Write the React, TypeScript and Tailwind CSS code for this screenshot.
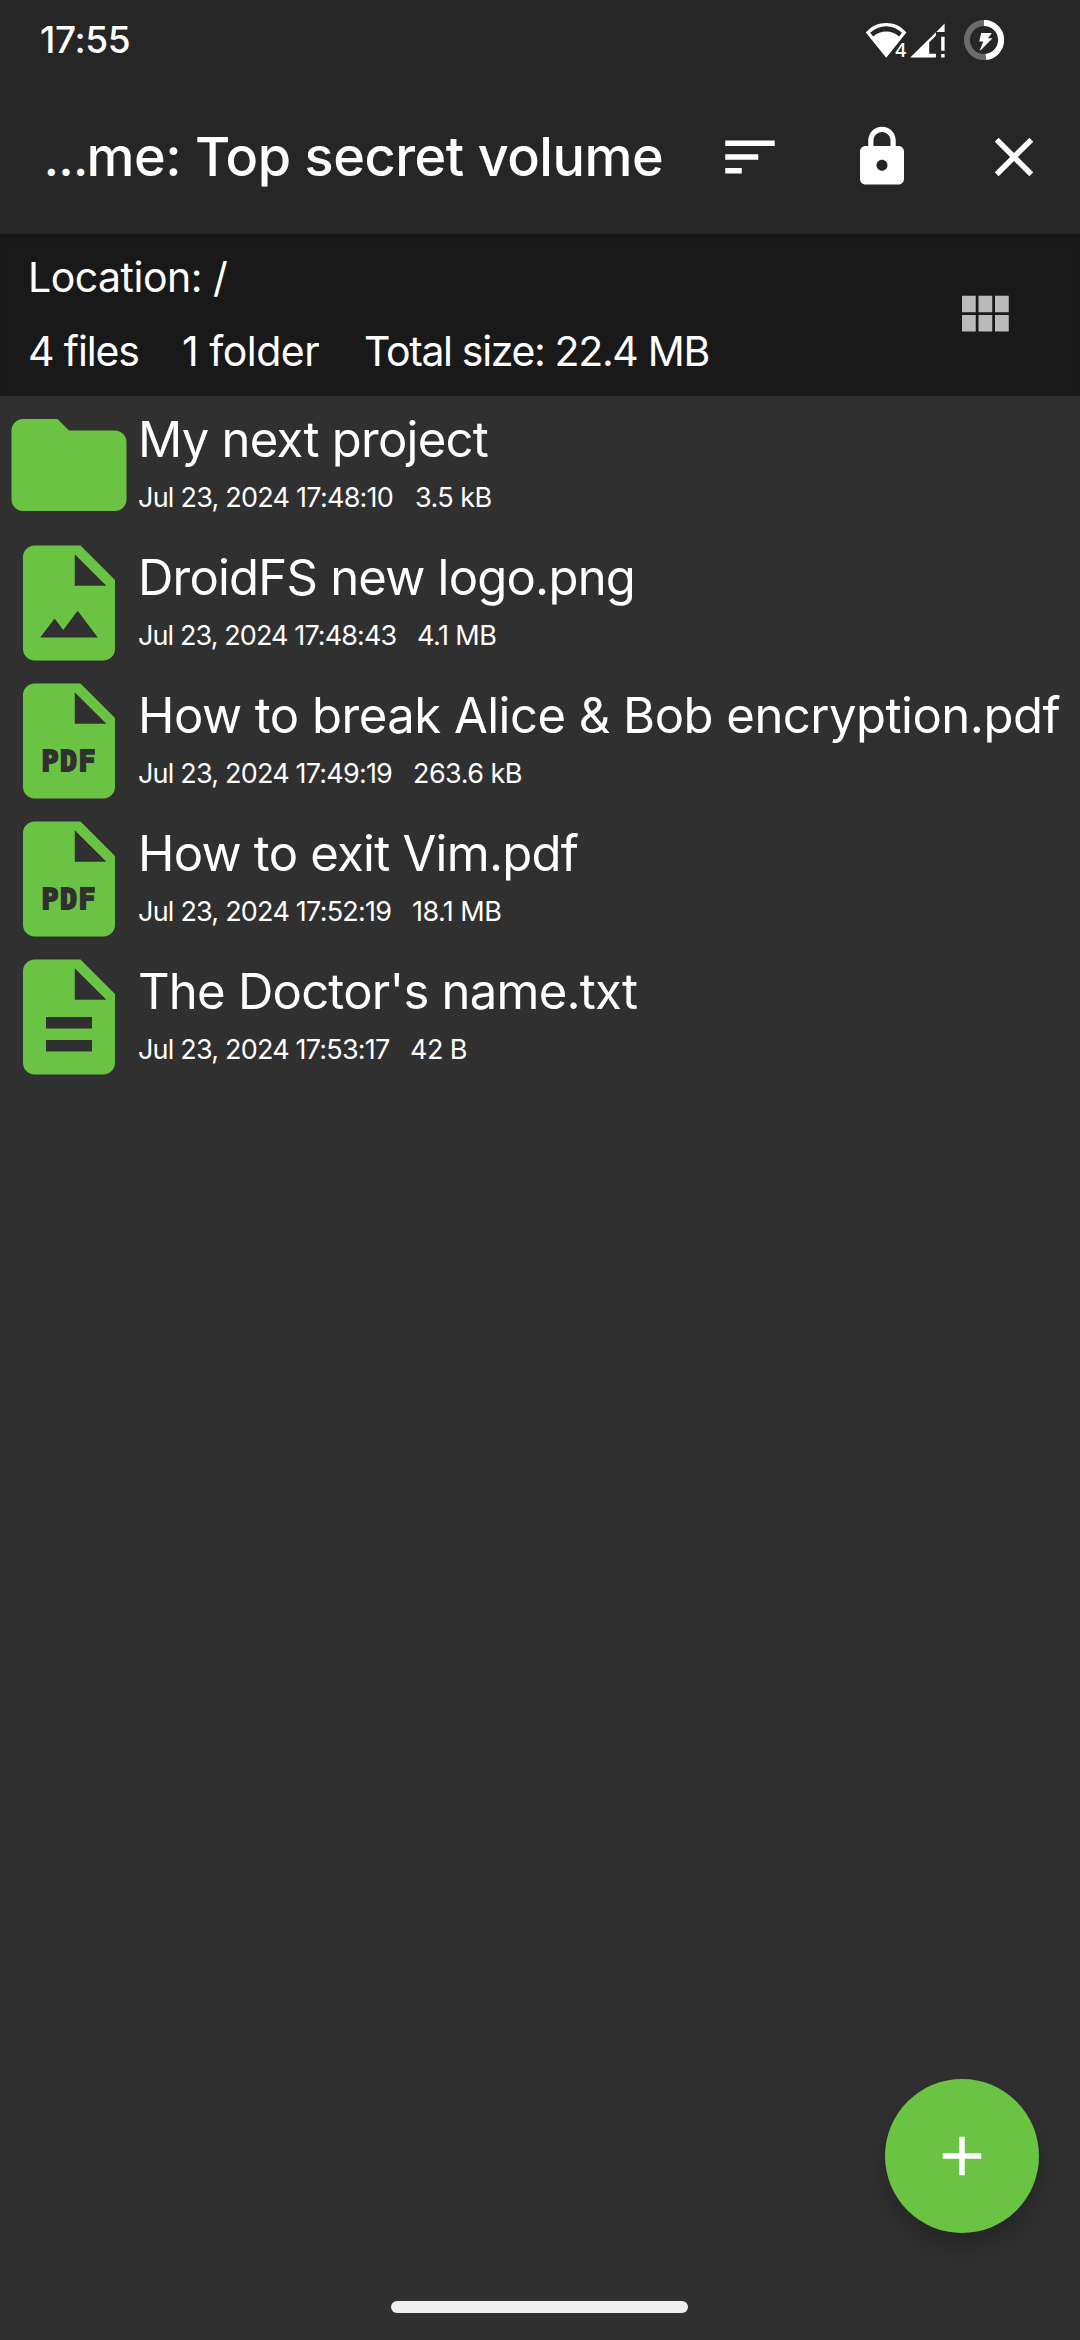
import type { ReactNode } from "react";

type Kind = "folder" | "image" | "pdf" | "text";

type Entry = {
  name: string;
  nameClass: string;
  date: string;
  dateClass: string;
  size: string;
  kind: Kind;
};

const entries: Entry[] = [
  { name: "My next project", nameClass: "tracking-[-0.75px]", date: "Jul 23, 2024 17:48:10", dateClass: "w-[277px] tracking-[-0.76px]", size: "3.5 kB", kind: "folder" },
  { name: "DroidFS new logo.png", nameClass: "tracking-[-0.78px]", date: "Jul 23, 2024 17:48:43", dateClass: "w-[279px] tracking-[-0.9px]", size: "4.1 MB", kind: "image" },
  { name: "How to break Alice & Bob encryption.pdf", nameClass: "tracking-[-0.5px]", date: "Jul 23, 2024 17:49:19", dateClass: "w-[275px] tracking-[-0.8px]", size: "263.6 kB", kind: "pdf" },
  { name: "How to exit Vim.pdf", nameClass: "tracking-[-0.74px]", date: "Jul 23, 2024 17:52:19", dateClass: "w-[274px] tracking-[-0.78px]", size: "18.1 MB", kind: "pdf" },
  { name: "The Doctor's name.txt", nameClass: "tracking-[-0.76px]", date: "Jul 23, 2024 17:53:17", dateClass: "w-[272px] tracking-[-0.8px]", size: "42 B", kind: "text" },
];

function Icon({ children, className = "size-[66px]" }: { children: ReactNode; className?: string }) {
  return (
    <svg viewBox="0 0 24 24" fill="currentColor" className={`shrink-0 ${className}`}>
      {children}
    </svg>
  );
}

const PAGE = "M14 2H6c-1.1 0-2 .9-2 2v16c0 1.1.9 2 2 2h12c1.1 0 2-.9 2-2V8l-6-6zM13 9V3.5L18.5 9H13z";

function FileIcon({ kind }: { kind: Kind }) {
  return (
    <Icon className="size-[138px] text-[#6bc343]">
      {kind === "folder" && <path d="M10 4H4c-1.1 0-2 .9-2 2v12c0 1.1.9 2 2 2h16c1.1 0 2-.9 2-2V8c0-1.1-.9-2-2-2h-8l-2-2z" />}
      {kind !== "folder" && <path d={PAGE} />}
      {kind === "image" && <path d="M7 18l2.5-3.3L11 16.7l2.5-3.35L17 18z" fill="#303030" />}
      {kind === "text" && <path d="M8 12h8v2H8zM8 16h8v2H8z" fill="#303030" />}
      {kind === "pdf" && (
        <text
          x="11.9"
          y="17.25"
          textAnchor="middle"
          fill="#303030"
          stroke="#303030"
          strokeWidth="0.35"
          className="[font-family:'DejaVu_Sans_Mono',monospace] text-[4.9px] font-bold"
          textLength="9.4"
        >
          PDF
        </text>
      )}
    </Icon>
  );
}

function StatusIcons() {
  return (
    <div className="flex items-center pr-[76px]">
      <svg viewBox="0 0 44 40" className="h-[40px] w-[44px] overflow-visible" fill="#fff">
        <path fillRule="evenodd" d="M.8 12.4C6.5 6 13.5 3 21.2 3s14.700 3 20.200 9.400L21.2 37.700zM5.200 12.700l2.900 3.900C12 13.200 16.500 11.600 21.200 11.600s9 1.600 12.900 5L37 12.700C32.400 8.600 27 6.300 21.200 6.300S9.800 8.600 5.200 12.700z" />
        <path d="M35.500 21.500L42 20V38H28.500L30 30z" fill="#262626" />
        <text x="30.200" y="36.800" className="[font-family:'Open_Sans',sans-serif] text-[20px] font-semibold" textLength="11" lengthAdjust="spacingAndGlyphs">4</text>
      </svg>
      <svg viewBox="0 0 36 40" className="ml-[1px] h-[40px] w-[36px]" fill="#fff">
        <path d="M34.600 3.500V12H26.300zM25.900 12.200V15.800L19.200 22.300V33.800H25.900V37.600H.2zM31.200 16.700h3.400v14h-3.400zM31.200 34h3.400v3.600h-3.400z" />
      </svg>
      <svg viewBox="0 0 40 40" className="ml-[18px] size-[40px]" fill="none">
        <circle cx="20" cy="20" r="17" stroke="#6b6b6b" strokeWidth="6" />
        <path d="M20 3A17 17 0 0 1 22 36.900" stroke="#fff" strokeWidth="6" />
        <path d="M17.200 13H27.800L24 18.300H28.500L16.700 30.300H15.800L19.300 21.400H15.200z" fill="#fff" />
      </svg>
    </div>
  );
}

export default function App() {
  return (
    <div className="relative flex h-[2340px] w-[1080px] flex-col overflow-hidden bg-[#303030] text-white [font-family:Inter,sans-serif]">
      <header className="bg-[#262626]">
        <div className="flex h-[79px] items-center justify-between pl-[40px]">
          <span className="text-[37px] leading-none font-medium tracking-[-0.4px]">17:55</span>
          <StatusIcons />
        </div>
        <div className="flex h-[155px] items-center pl-[44px]">
          <h1 className="w-[673px] text-[54px] leading-none font-medium tracking-[-0.47px] whitespace-nowrap">
            <span className="text-[46px] font-semibold tracking-[-1.5px]">…</span>me: Top secret volume
          </h1>
          <Icon><path d="M3 18h6v-2H3v2zM3 6v2h18V6H3zm0 7h12v-2H3v2z" /></Icon>
          <Icon className="ml-[66px] size-[66px]">
            <path d="M18 8h-1V6c0-2.760-2.240-5-5-5S7 3.240 7 6v2H6c-1.100 0-2 .9-2 2v10c0 1.100.9 2 2 2h12c1.100 0 2-.9 2-2V10c0-1.100-.9-2-2-2zm-6 9c-1.100 0-2-.9-2-2s.9-2 2-2 2 .9 2 2-.9 2-2 2zm3.100-9H8.900V6c0-1.710 1.390-3.100 3.100-3.100s3.100 1.390 3.100 3.100v2z" />
          </Icon>
          <Icon className="ml-[66px] size-[66px]">
            <path d="M19 6.410L17.590 5 12 10.590 6.410 5 5 6.410 10.590 12 5 17.590 6.410 19 12 13.410 17.590 19 19 17.590 13.410 12z" />
          </Icon>
        </div>
      </header>

      <section className="flex h-[162px] items-center justify-between bg-[#191919] pr-[63px] pl-[28px] text-[41px] leading-[56px] whitespace-nowrap shadow-[inset_0_5px_5px_-2px_rgba(0,0,0,0.15)]">
        <div className="flex flex-col gap-[18px] pb-[2px]">
          <p className="tracking-[-0.5px]">Location: /</p>
          <div className="flex">
            <span className="w-[154px] tracking-[-1.1px]">4 files</span>
            <span className="w-[182px] tracking-[-0.5px]">1 folder</span>
            <span className="tracking-[-1.35px]">Total size: 22.4 MB</span>
          </div>
        </div>
        <Icon className="size-[66px] text-[#bababa]">
          <path d="M4 11h5V5H4v6zm0 7h5v-6H4v6zm6 0h5v-6h-5v6zm6 0h5v-6h-5v6zm-6-7h5V5h-5v6zm6-6v6h5V5h-5z" />
        </Icon>
      </section>

      <ul className="flex flex-col">
        {entries.map((e) => (
          <li key={e.name} className="flex h-[138px] whitespace-nowrap">
            <FileIcon kind={e.kind} />
            <div className="pt-[14px]">
              <p className={`text-[49px] leading-[60px] ${e.nameClass}`}>{e.name}</p>
              <div className="mt-[12px] flex text-[27px] leading-[32px]">
                <span className={e.dateClass}>{e.date}</span>
                <span className="tracking-[-0.55px]">{e.size}</span>
              </div>
            </div>
          </li>
        ))}
      </ul>

      <button className="absolute right-[41px] bottom-[107px] flex size-[154px] items-center justify-center rounded-full bg-[#6bc343] shadow-[0_14px_28px_rgba(0,0,0,0.24)]">
        <Icon><path d="M19 13h-6v6h-2v-6H5v-2h6V5h2v6h6v2z" /></Icon>
      </button>
      <div className="absolute bottom-[27.500px] left-[391px] h-[12px] w-[297px] rounded-full bg-[#eeeeee]" />
    </div>
  );
}
